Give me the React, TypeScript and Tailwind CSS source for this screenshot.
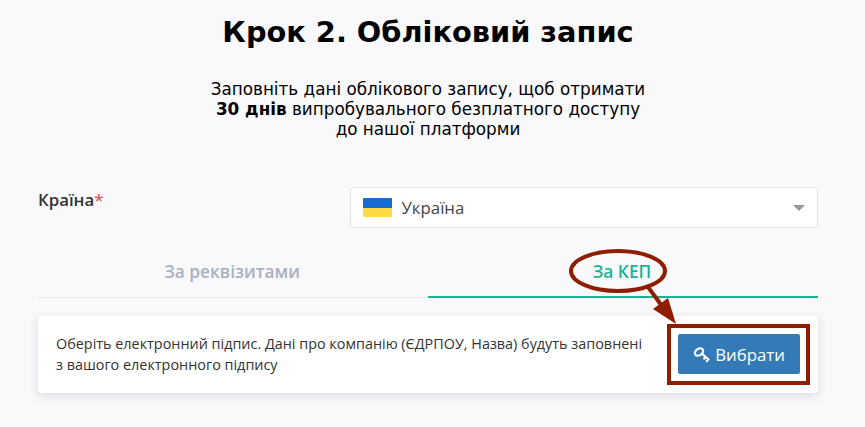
export default function App() {
  return (
    <main className="relative h-[427px] w-[865px] overflow-hidden bg-[#f9f9fb] pl-[38px] pt-3 font-['Open_Sans',sans-serif]">
      <header className="w-[780px] text-center font-['DejaVu_Sans',sans-serif] text-black">
        <h1 className="text-[28.8px] font-bold leading-10">Крок 2. Обліковий запис</h1>
        <p className="mt-[27px] text-[16.8px] leading-5">
          Заповніть дані облікового запису, щоб отримати
          <br />
          <b>30 днів</b> випробувального безплатного доступу
          <br />
          до нашої платформи
        </p>
      </header>
      <div className="mt-12 flex w-[780px] justify-between">
        <label className="pt-px text-[16.8px] font-semibold leading-6 text-[#333]">
          Країна<span className="text-[#ed5565]">*</span>
        </label>
        <div className="flex h-[41px] w-[468px] items-center rounded-[4px] border border-[#e5e6e7] bg-white px-3">
          <span className="h-[19px] w-[29px] overflow-hidden rounded-[1px] bg-[#ffda44]">
            <span className="block h-[10px] bg-[#156dd1]" />
          </span>
          <span className="ml-[9.5px] text-[16.8px] text-[#444]">Україна</span>
          <span className="ml-auto border-x-[6px] border-t-[6px] border-x-transparent border-t-[#999]" />
        </div>
      </div>
      <nav className="mt-[18px] flex h-[52px] w-[780px] text-center text-[17.28px] font-semibold leading-[51px]">
        <span className="w-[390px] border-b border-[#e7eaec] pr-[2px] text-[#a7b1c2]">За реквізитами</span>
        <span className="w-[390px] border-b-2 border-[#1ab394] pr-[2px] text-[#1ab394]">За КЕП</span>
      </nav>
      <section className="mt-[18px] flex h-[77px] w-[780px] items-center justify-between rounded bg-white px-[18px] pb-px shadow-[0_3px_10px_rgba(40,40,80,0.15)]">
        <p className="text-[14.4px] leading-[21px] text-[#333]">
          Оберіть електронний підпис. Дані про компанію (ЄДРПОУ, Назва) будуть заповнені
          <br />
          з вашого електронного підпису
        </p>
        <button className="flex h-10 w-[122px] items-center justify-center gap-[5px] whitespace-nowrap rounded-[2px] bg-[#337ab7] pt-px text-[16.8px] text-white">
          <svg width="17" height="16" viewBox="0 0 17 16" fill="none" stroke="currentColor" strokeWidth="2.2">
            <ellipse cx="6" cy="5" rx="4.5" ry="3.2" transform="rotate(-35 6 5)" />
            <path d="M8.7 6.5L16.2 13M12.8 9.7L10.5 12.3M15.4 12L13.3 14.8" />
          </svg>
          Вибрати
        </button>
      </section>
      <svg className="absolute inset-0" width="865" height="427" fill="none" stroke="#8f1d00" strokeWidth="4">
        <ellipse cx="618" cy="271" rx="47" ry="20" />
        <path d="M648 287L662 306" />
        <path d="M676 324L653 309L668 298Z" fill="#8f1d00" stroke="none" />
        <rect x="669" y="326" width="139" height="57" />
      </svg>
    </main>
  );
}
